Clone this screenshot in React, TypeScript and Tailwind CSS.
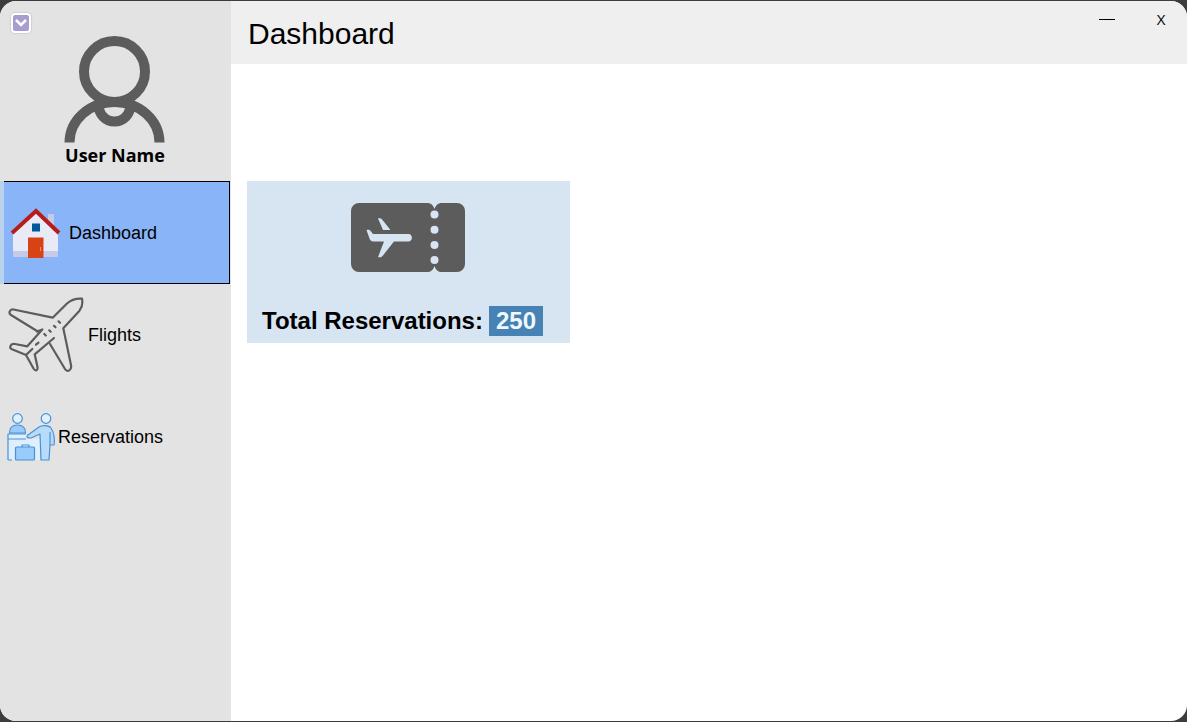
import React from "react";

function UserIcon() {
  return (
    <svg width="102" height="108" viewBox="0 0 102 108" fill="none" stroke="#5c5c5c" strokeWidth="10" aria-hidden="true">
      <circle cx="50.500" cy="36.500" r="30.500" />
      <path d="M5.500 107.500A45 40.500 0 0 1 95.500 107.500" />
      <path d="M34.500 70A16 16.500 0 0 0 66.500 70" />
    </svg>
  );
}

function HouseIcon() {
  return (
    <svg width="50" height="50" viewBox="0 0 50 50" aria-hidden="true">
      <path fill="#c5cae9" d="M37 6h6v16h-6z" />
      <path fill="#e8eaf6" d="M25 3 2 25v24h45V25z" />
      <path fill="#c5cae9" d="M2 43h45v6H2z" />
      <path d="M1 25 25 3l23 22" fill="none" stroke="#b71c1c" strokeWidth="4" />
      <path fill="#01579b" d="M21 15.500h8v8h-8z" />
      <path fill="#d84315" d="M17 29.500h15.500V50H17z" />
      <path fill="#ff8a65" d="M29 39h1v4h-1z" />
    </svg>
  );
}

function PlaneIcon() {
  return (
    <svg width="76" height="77" viewBox="0 0 76 77" fill="none" stroke="#5c5c5c" strokeWidth="2.200" strokeLinecap="round" strokeLinejoin="round" aria-hidden="true">
      <path d="M29 34 3 18C0 16 2 12 5.500 12.500L44.700 20.700 59 6.500C64 2 69 1.300 74 1.700c1 5 .5 8-2.500 12L55.300 31.300 63 68c1 5-3.500 8-6 4L42 47" />
      <path d="M29 34.500 34.300 32.500 19.300 49.300 7 47C2 46 1 51 4 52.300L18 58l7.500 13.500c2 3 4.500 2 4-1.500L26.700 57.300 46 41M18 58l6.300-6M28 47.700l2.500-2M36.300 37l1.500 1.500M41.200 33.300l1.500 1.500M46 28.800l1.500 1.500M50.500 24.300l1.500 1.500" />
    </svg>
  );
}

function ReceptionIcon() {
  return (
    <svg width="50" height="50" viewBox="0 0 50 50" stroke="#4b91d1" strokeWidth="1.200" strokeLinejoin="round" aria-hidden="true">
      <path d="M2 22h18v5h14v21H2z" fill="#def0ff" stroke="none" />
      <path d="M2 48V22h18M2 27h18M2 48h4" fill="none" />
      <circle cx="11.500" cy="6.500" r="4.800" fill="#dff1ff" />
      <circle cx="40" cy="6.500" r="4.800" fill="#dff1ff" />
      <path d="M3.500 21c0-6 3-8 8-8s8 2 8 8z" fill="#98ccfc" />
      <path d="m22 23 11-8c3-2 10-2 12 1 3 4 4 12 3 17h-4l-1 15h-8l-1-26-9 4c-4 0-5-1-3-3Z" fill="#b7dcfb" />
      <path d="M44 20v13" fill="none" />
      <path d="M16 36v-3h7v3" fill="none" />
      <rect x="9.500" y="35" width="19" height="13" rx="1" fill="#98ccfc" />
    </svg>
  );
}

function TicketIcon() {
  return (
    <svg width="114" height="69" viewBox="0 0 114 69" aria-hidden="true">
      <path fill="#5c5c5c" d="M8 0h68c4 0 6 2 7.500 6C85 2 87 0 91 0h15a8 8 0 0 1 8 8v53a8 8 0 0 1-8 8H91c-4 0-6-2-7.500-6C82 67 80 69 76 69H8a8 8 0 0 1-8-8V8a8 8 0 0 1 8-8Z" />
      <g fill="#d7e4f2">
        <circle cx="83.500" cy="11.500" r="4" />
        <circle cx="83.500" cy="26.700" r="4" />
        <circle cx="83.500" cy="42" r="4" />
        <circle cx="83.500" cy="57" r="4" />
        <path d="M15.500 27C18 26.500 19 27 20 28.500L22 31h35.500c4.500 0 4.500 7.500 0 7.500H43L31.500 53c-1 1.300-2 1.500-4.500 1.200L33 38.500H22.500c-2.500 0-3.500-1.500-4.200-3.500zM27 15.500c2-.5 3.500 0 4.500 1.500L39.500 27H32z" />
      </g>
    </svg>
  );
}

const items = [
  { label: "Dashboard", icon: <HouseIcon />, style: "gap-2 border-y border-r border-black bg-[#8ab4f8] pl-[7px]" },
  { label: "Flights", icon: <PlaneIcon />, style: "gap-1 pl-1" },
  { label: "Reservations", icon: <ReceptionIcon />, style: "gap-0.5 pl-0.5" },
];

export default function App() {
  return (
    <div className="min-h-screen bg-[#3c3c3c] py-px font-['Liberation_Sans',Arial,sans-serif] text-black">
      <div className="flex min-h-[calc(100vh-2px)] overflow-hidden rounded-2xl bg-white">
        <aside className="relative w-[231px] shrink-0 bg-[#e3e3e3] pt-[34px] pr-px">
          <button aria-label="Toggle menu" className="absolute top-3 left-[11px] flex size-5 items-center justify-center rounded-sm border-2 border-white bg-[#a89dd3] shadow-[0_0_1px_1px_#cfcfcf]">
            <svg width="14" height="14" viewBox="0 0 14 14" fill="none" stroke="white" strokeWidth="2.500" aria-hidden="true"><path d="m2 4 5 5 5-5" /></svg>
          </button>
          <div className="flex flex-col items-center">
            <UserIcon />
            <div className="text-lg leading-6 font-bold font-['Open_Sans','Noto_Sans',sans-serif]">User Name</div>
          </div>
          <nav className="mt-3.5 flex flex-col">
            {items.map((item, i) => (
              <div key={item.label} className={i === 0 ? "bg-[#bad2ec] pl-1" : "pl-1"}>
                <button className={`flex w-full items-center text-left text-lg ${i === 0 ? "h-[103px]" : "h-[102px]"} ${item.style}`}>
                  {item.icon}
                  <span>{item.label}</span>
                </button>
              </div>
            ))}
          </nav>
        </aside>
        <div className="flex min-w-0 flex-1 flex-col">
          <header className="flex h-[63px] items-start justify-between bg-[#efefef] pr-4 pl-[17px]">
            <h1 className="pt-[13px] text-3xl leading-10">Dashboard</h1>
            <div className="flex gap-9 pt-2 font-['Open_Sans','Noto_Sans',sans-serif] text-[15px] leading-5">
              <button aria-label="Minimize" className="flex h-5 w-4 items-center"><span className="h-px w-4 bg-black" /></button>
              <button aria-label="Close" className="w-5 text-center">X</button>
            </div>
          </header>
          <main className="flex-1 px-4 pt-[117px]">
            <section className="flex h-[162px] w-[323px] max-w-full flex-col justify-between bg-[#d7e4f2] pt-[22px] pb-[7px]">
              <div className="flex justify-center pr-0.5"><TicketIcon /></div>
              <div className="flex items-center gap-1.5 pl-[15px] text-2xl leading-[30px] font-bold">
                <span>Total Reservations:</span>
                <span className="flex bg-[#4682b4] px-[7px] text-[#f0f8ff]">250</span>
              </div>
            </section>
          </main>
        </div>
      </div>
    </div>
  );
}
